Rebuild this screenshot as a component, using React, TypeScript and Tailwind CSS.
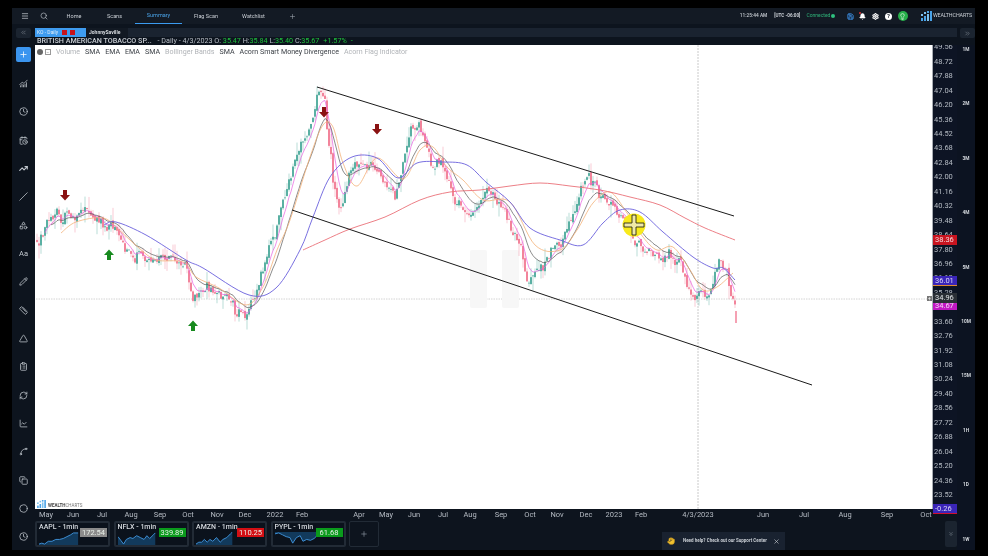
import React from "react";
import {
  Menu, Search, Plus, Save, Bell, Settings, Lightbulb, ChevronsLeft, ChevronsRight, ChevronsDown, X, Clock, CalendarClock,
  TrendingUp, Slash, Shapes, Pencil, Ruler, ClipboardList, RefreshCw, ChartLine, Spline, Copy, Circle, Clock4, Hand, Triangle, ChartNoAxesCombined,
} from "lucide-react";

type P = [number, number];

function lerp(pts: P[], x: number) {
  if (x <= pts[0][0]) return pts[0][1];
  for (let i = 1; i < pts.length; i++) {
    if (x <= pts[i][0]) {
      const t = (x - pts[i - 1][0]) / (pts[i][0] - pts[i - 1][0]);
      return pts[i - 1][1] + (pts[i][1] - pts[i - 1][1]) * t;
    }
  }
  return pts[pts.length - 1][1];
}

let seed = 12345;
function rnd() {
  seed = (seed + 0x6d2b79f5) | 0;
  let t = Math.imul(seed ^ (seed >>> 15), 1 | seed);
  t = (t + Math.imul(t ^ (t >>> 7), 61 | t)) ^ t;
  return ((t ^ (t >>> 14)) >>> 0) / 4294967296;
}

const pricePath: P[] = [
  [37, 240], [45, 225], [55, 213], [65, 214], [85, 208], [100, 222], [115, 230], [130, 252], [150, 258], [165, 258], [178, 262],
  [186, 265], [192, 300], [205, 284], [225, 296], [245, 316], [255, 295], [270, 250], [285, 190], [300, 150], [311, 125], [318, 92], [325, 110],
  [333, 180], [340, 213], [350, 168], [370, 166], [385, 186], [395, 195], [410, 130], [420, 128], [432, 168], [440, 165], [455, 205], [470, 215],
  [490, 195], [505, 215], [520, 252], [527, 282], [540, 270], [555, 240], [565, 240], [580, 195], [588, 176], [600, 195], [615, 205],
  [625, 215], [635, 240], [650, 255], [660, 260], [670, 250], [680, 265], [690, 295], [710, 293], [720, 258], [728, 280], [735, 300],
];

const orange: P[] = [[61,233],[76,222],[103,218],[119,230],[139,248],[156,260],[183,262],[196,277],[219,288],[246,305],[263,287],[277,250],[290,220],[310,157],[323,125],[333,127],[343,163],[357,186],[377,158],[403,179],[420,150],[433,147],[447,167],[463,180],[483,200],[510,202],[535,245],[560,250],[577,230],[593,203],[610,192],[627,213],[643,237],[657,250],[673,247],[690,270],[703,290],[717,287],[733,273]];
const blue: P[] = [[104,225],[116,222],[146,235],[186,260],[203,268],[249,295],[276,288],[300,250],[313,217],[330,177],[352,157],[377,158],[398,178],[417,163],[443,162],[467,165],[487,183],[510,202],[530,228],[560,240],[583,245],[603,223],[620,210],[640,212],[663,232],[693,257],[713,268],[723,268],[735,280]];
const red: P[] = [[303,250],[325,240],[350,229],[385,217],[420,200],[450,192],[480,190],[510,186],[540,183],[570,186],[600,190],[630,197],[660,205],[685,218],[705,228],[735,240]];

type C = { x: number; o: number; c: number; h: number; l: number };
const candles: C[] = [];
{
  let prev = pricePath[0][1];
  let drift = 0;
  for (let x = 37; x <= 735; x += 2) {
    const base = lerp(pricePath, x);
    drift = drift * 0.7 + (rnd() - 0.5) * 8;
    const c = base + drift + (rnd() - 0.5) * 9;
    const o = prev + (rnd() - 0.5) * 4;
    const h = Math.min(o, c) - rnd() * rnd() * 15;
    const l = Math.max(o, c) + rnd() * rnd() * 15;
    candles.push({ x, o, c, h, l });
    prev = c;
  }
}

function ema(alpha: number, startX: number) {
  let v = lerp(pricePath, startX);
  const out: P[] = [];
  for (const k of candles) {
    v = v + (k.c - v) * alpha;
    if (k.x >= startX) out.push([k.x, v]);
  }
  return out;
}
const pts = (a: P[]) => a.map((p) => `${p[0].toFixed(1)},${p[1].toFixed(1)}`).join(" ");

function smooth(a: P[]) {
  let d = `M${a[0][0]} ${a[0][1]}`;
  for (let i = 0; i < a.length - 1; i++) {
    const p0 = a[Math.max(0, i - 1)];
    const p1 = a[i];
    const p2 = a[i + 1];
    const p3 = a[Math.min(a.length - 1, i + 2)];
    const c1x = p1[0] + (p2[0] - p0[0]) / 6;
    const c1y = p1[1] + (p2[1] - p0[1]) / 6;
    const c2x = p2[0] - (p3[0] - p1[0]) / 6;
    const c2y = p2[1] - (p3[1] - p1[1]) / 6;
    d += ` C${c1x.toFixed(1)} ${c1y.toFixed(1)} ${c2x.toFixed(1)} ${c2y.toFixed(1)} ${p2[0]} ${p2[1]}`;
  }
  return d;
}

function Arrow({ x, y, up }: { x: number; y: number; up?: boolean }) {
  const d = up
    ? `M${x} ${y - 5.5} L${x + 5} ${y} L${x + 2} ${y} L${x + 2} ${y + 5} L${x - 2} ${y + 5} L${x - 2} ${y} L${x - 5} ${y} Z`
    : `M${x} ${y + 5.5} L${x + 5} ${y} L${x + 2} ${y} L${x + 2} ${y - 5} L${x - 2} ${y - 5} L${x - 2} ${y} L${x - 5} ${y} Z`;
  return <path d={d} fill={up ? "#178a1e" : "#8a1212"} />;
}

function ChartDrawing() {
  return (
    <svg viewBox="35 45 897 464" className="block h-full w-full">
      <line x1="36" x2="932" y1="299" y2="299" stroke="#c9c9c9" strokeWidth="0.8" strokeDasharray="1.5 1" />
      <line x1="698" x2="698" y1="45" y2="509" stroke="#c4c4c4" strokeWidth="0.9" strokeDasharray="2 1" />
      <rect x="470" y="250" width="17" height="58" rx="2" fill="#f7f7f7" />
      <rect x="502" y="250" width="17" height="58" rx="2" fill="#f7f7f7" />
      {candles.map((k) => {
        const up = k.c < k.o;
        const col = up ? "#2f9c8c" : "#ee6481";
        return (
          <g key={k.x}>
            <line x1={k.x} x2={k.x} y1={k.h} y2={k.l} stroke={col} strokeWidth="0.6" opacity="0.55" />
            <rect x={k.x - 0.75} y={Math.min(k.o, k.c)} width="1.5" height={Math.max(0.8, Math.abs(k.o - k.c))} fill={col} />
          </g>
        );
      })}
      <rect x="735.4" y="311" width="1.2" height="12" fill="#ee6481" />
      <polyline points={pts(ema(0.3, 45))} fill="none" stroke="#e85ee0" strokeWidth="0.7" />
      <polyline points={pts(ema(0.14, 50))} fill="none" stroke="#5a5a5a" strokeWidth="0.7" />
      <path d={smooth(orange)} fill="none" stroke="#f4b27a" strokeWidth="0.8" />
      <path d={smooth(blue)} fill="none" stroke="#6a60dc" strokeWidth="0.9" />
      <path d={smooth(red)} fill="none" stroke="#ea7078" strokeWidth="0.9" />
      <line x1="317" y1="87" x2="734" y2="216" stroke="#1a1a1a" strokeWidth="1" />
      <line x1="292" y1="210" x2="812" y2="385" stroke="#1a1a1a" strokeWidth="1" />
      <Arrow x={65} y={195} />
      <Arrow x={324} y={112} />
      <Arrow x={377} y={129} />
      <Arrow x={109} y={255} up />
      <Arrow x={193} y={326} up />
      <circle cx="634" cy="225" r="11.5" fill="#f8ea1c" />
      <path d="M632 215h4v8h8v4h-8v8h-4v-8h-8v-4h8z" fill="#efe9a8" stroke="#2a2a1a" strokeWidth="0.9" />
    </svg>
  );
}

function LogoMark({ className }: { className: string }) {
  return (
    <svg viewBox="0 0 11 10" className={className}>
      <rect x="0" y="7" width="2" height="3" fill="#4aa3e8" />
      <rect x="3" y="5" width="2" height="5" fill="#4aa3e8" />
      <rect x="6" y="3" width="2" height="7" fill="#7cc0ee" />
      <rect x="9" y="0" width="2" height="10" fill="#4aa3e8" />
      <rect x="0" y="3" width="2" height="2" fill="#7cc0ee" />
      <rect x="3" y="1" width="2" height="2" fill="#7cc0ee" />
      <rect x="6" y="0" width="2" height="2" fill="#4aa3e8" />
    </svg>
  );
}

const iconCls = "h-[9px] w-[9px] text-[#c3c9d0]";
const sideIcons = [
  <ChartNoAxesCombined className={iconCls} />, <Clock className={iconCls} />, <CalendarClock className={iconCls} />, <TrendingUp className={iconCls} strokeWidth={3} />,
  <Slash className={iconCls} />, <Shapes className={iconCls} />, <span className="text-[7.5px] leading-none text-[#c3c9d0]">Aa</span>, <Pencil className={iconCls} />,
  <Ruler className={iconCls} />, <Triangle className={iconCls} />, <ClipboardList className={iconCls} />, <RefreshCw className={iconCls} />,
  <ChartLine className={iconCls} />, <Spline className={iconCls} />, <Copy className={iconCls} />, <Circle className={iconCls} />, <Clock4 className={iconCls} />,
];

const nav = [
  { t: "Home", w: "w-[40px]" }, { t: "Scans", w: "w-[41px]" }, { t: "Summary", w: "w-[47px]", active: true }, { t: "Flag Scan", w: "w-[48px]" }, { t: "Watchlist", w: "w-[47px]" },
];

const prices = ["49.56","48.72","47.88","47.04","46.20","45.36","44.52","43.68","42.84","42.00","41.16","40.32","39.48","38.64","37.80","36.96","36.12","35.28","34.44","33.60","32.76","31.92","31.08","30.24","29.40","28.56","27.72","26.88","26.04","25.20","24.36","23.52"];
const frames = ["1M","2M","3M","4M","5M","10M","15M","1H","1D","1W"];
const ticks: [string, number][] = [["May",46],["Jun",73],["Jul",102],["Aug",131],["Sep",160],["Oct",188],["Nov",217],["Dec",245],["2022",275],["Feb",302],["Apr",359],["May",386],["Jun",414],["Jul",443],["Aug",470],["Sep",501],["Oct",530],["Nov",557],["Dec",586],["2023",614],["Feb",641],["4/3/2023",698],["Jun",763],["Jul",804],["Aug",845],["Sep",887],["Oct",926]];
const legend: [string, boolean][] = [["Volume",false],["SMA",true],["EMA",true],["EMA",true],["SMA",true],["Bollinger Bands",false],["SMA",true],["Acorn Smart Money Divergence",true],["Acorn Flag Indicator",false]];

const minis = [
  { s: "AAPL", p: "172.54", c: "bg-[#8b8b8b]", line: [[0,13],[3,12],[6,13],[10,10],[14,10],[18,8],[22,8],[26,7],[30,5],[34,3],[37,1],[42,1]] as P[], above: false },
  { s: "NFLX", p: "339.89", c: "bg-[#0a9a1c]", line: [[0,5],[3,9],[6,13],[9,8],[13,6],[16,7],[20,4],[24,6],[28,8],[31,4],[34,7],[38,3],[40,1]] as P[], above: false },
  { s: "AMZN", p: "110.25", c: "bg-[#d20f14]", line: [[0,13],[3,11],[6,11],[9,8],[12,11],[15,8],[18,10],[22,6],[26,11],[29,8],[33,6],[37,2],[39,0]] as P[], above: false },
  { s: "PYPL", p: "61.68", c: "bg-[#0a9a1c]", line: [[0,2],[4,1],[8,3],[12,5],[16,6],[19,12],[23,6],[27,4],[30,10],[34,8],[38,9],[42,7],[44,5]] as P[], above: true },
];

function Mini({ s, p, c, line, above }: (typeof minis)[number]) {
  const last = line[line.length - 1][0];
  const area = above ? `0,0 ${pts(line)} ${last},0` : `0,14 ${pts(line)} ${last},14`;
  return (
    <div className="relative h-[26px] w-[75px] rounded-[2px] border-2 border-[#222b36] bg-[#0b121c] pl-[2px]">
      <p className="text-[7px] leading-[9px] font-medium text-[#d5d9de]">{s} - 1min</p>
      <svg viewBox="0 0 44 14" className="h-[13px] w-[41px]" preserveAspectRatio="none">
        <polygon points={area} fill="#123a5c" />
        <polyline points={pts(line)} fill="none" stroke="#3f93dc" strokeWidth="1" />
      </svg>
      <span className={`absolute top-[5px] right-[1px] flex h-[9px] w-[27px] items-center justify-center text-[7.5px] text-[#e8efe8] ${c}`}>{p}</span>
    </div>
  );
}

export default function App() {
  let prevTick = 35;
  return (
    <div className="h-[556px] w-[988px] overflow-hidden bg-black pt-2 pr-[13px] pb-[6px] pl-3 font-[Roboto,sans-serif] blur-[0.35px]">
      <div className="flex h-[542px] w-[963px] flex-col bg-[#0d141e]">
        {/* header */}
        <header className="flex h-4 shrink-0 items-center bg-[#131a24]">
          <Menu className="ml-[9px] h-[8px] w-[8px] text-[#d5d9de]" />
          <Search className="ml-[11px] h-[8px] w-[8px] text-[#b8bec6]" />
          <nav className="ml-[6px] flex h-full">
            {nav.map((n) => (
              <span key={n.t} className={`flex h-full items-center justify-center text-[5.5px] ${n.w} ${n.active ? "border-b border-[#3b9bf0] text-[#4aa3e8]" : "text-[#c9ced4]"}`}>{n.t}</span>
            ))}
          </nav>
          <Plus className="ml-[12px] h-[7px] w-[7px] text-[#9aa2ab]" />
          <div className="ml-auto flex items-center text-[5px] text-[#c9ced4]">
            <span className="text-[4.8px] font-medium">11:25:44 AM</span>
            <span className="ml-[7px] text-[4.6px] font-bold">[UTC -06:00]</span>
            <span className="ml-[6px] text-[#2fb57a]">Connected</span>
            <span className="ml-[1px] h-[3.5px] w-[3.5px] rounded-full bg-[#2fc07f]" />
            <Save className="ml-[12px] h-[7px] w-[7px] text-[#3f93ea]" strokeWidth={3} />
            <span className="relative ml-[5px]">
              <Bell className="h-[7px] w-[7px] fill-white text-white" />
              <span className="absolute -top-[1px] left-0 h-[2.5px] w-[2.5px] rounded-full bg-[#e03030]" />
            </span>
            <Settings className="ml-[6px] h-[7px] w-[7px] text-white" strokeWidth={3.5} />
            <span className="ml-[6px] flex h-[7px] w-[7px] items-center justify-center rounded-full bg-white text-[6px] leading-none font-bold text-[#131a24]">?</span>
            <span className="ml-[6px] flex h-[10px] w-[10px] items-center justify-center rounded-full bg-[#27b04a]">
              <Lightbulb className="h-[7px] w-[7px] text-white" />
            </span>
            <LogoMark className="ml-[13px] h-[10px] w-[11px]" />
            <span className="mr-[3px] ml-[1px] text-[5.3px] tracking-[-0.1px] text-[#c9ced4]">WEALTHCHARTS</span>
          </div>
        </header>

        <div className="flex min-h-0 flex-1">
          {/* left tool bar */}
          <aside className="flex w-[23px] shrink-0 flex-col items-center">
            <span className="mt-1 mb-[2px] flex h-[10px] w-[15px] items-center justify-center rounded-[2px] bg-[#1b2430]">
              <ChevronsLeft className="h-[7px] w-[7px] text-[#7f8893]" />
            </span>
            <span className="flex h-[28.4px] items-center">
              <span className="flex h-[15px] w-[15px] items-center justify-center rounded-[2px] bg-[#3b95ef]">
                <Plus className="h-[9px] w-[9px] text-white" />
              </span>
            </span>
            {sideIcons.map((ic, i) => (
              <span key={i} className="flex h-[28.42px] translate-y-[1px] items-center justify-center">{ic}</span>
            ))}
          </aside>

          <div className="flex min-w-0 flex-1 flex-col">
            {/* tab rows */}
            <div className="flex h-[21px] shrink-0">
              <div className="min-w-0 flex-1">
                <div className="mt-[4px] flex h-[9px] bg-[#1a2330]">
                  <span className="flex w-[51px] items-center gap-[2px] bg-[#3f9cf0] pl-[2px] text-[5px] text-[#dbeaf8]">
                    <span className="mr-[2px]">KO - Daily</span>
                    <span className="h-[5px] w-[5px] bg-[#c8131b]" />
                    <span className="ml-[1px] h-[5px] w-[5px] bg-[#c8131b]" />
                  </span>
                  <span className="flex w-[42px] items-center bg-[#121923] pl-[3px] text-[5px] font-bold text-[#d5d9de]">JohnnySaville</span>
                </div>
                <p className="ml-[2px] whitespace-nowrap text-[7.2px] leading-[8px] text-[#b8bec6]">
                  <span className="font-medium text-[#c9ced4]">BRITISH AMERICAN TOBACCO SP...</span>
                  <span className="ml-[4px]"> - Daily - 4/3/2023 O: </span>
                  <span className="text-[#1fc03c]">35.47</span> H:<span className="text-[#1fc03c]">35.84</span> L:<span className="text-[#1fc03c]">35.40</span> C:<span className="text-[#1fc03c]">35.67</span>
                  <span className="ml-[4px] text-[#1fc03c]">+1.57%</span>
                  <span className="ml-[4px] text-[#1fc03c]">-</span>
                </p>
              </div>
              <span className="mt-[4px] ml-[3px] flex h-[10px] w-[15px] items-center justify-center rounded-[2px] bg-[#1b2430]">
                <ChevronsRight className="h-[7px] w-[7px] text-[#7f8893]" />
              </span>
            </div>

            <div className="flex min-h-0 flex-1">
              <div className="flex min-w-0 flex-1 flex-col">
                {/* chart + axis */}
                <div className="flex h-[464px] shrink-0">
                  <div className="relative h-full w-[897px] bg-white">
                    <ChartDrawing />
                    <div className="absolute top-[2px] left-[2px] flex items-center text-[7.1px] leading-[10px] text-[#3a3f45]">
                      <span className="h-[6px] w-[6px] rounded-full bg-[#666]" />
                      <span className="ml-[2px] flex h-[6px] w-[6px] items-center justify-center border border-[#999] text-[5px] leading-none text-[#777]">−</span>
                      {legend.map(([t, on], i) => (
                        <span key={i} className={`ml-[5px] whitespace-nowrap first:ml-[2px] ${on ? "" : "text-[#b1b4b8]"}`}>{t}</span>
                      ))}
                    </div>
                    <div className="absolute bottom-[1px] left-[2px] flex items-end">
                      <LogoMark className="h-[8px] w-[9px]" />
                      <span className="ml-[2px] text-[4.5px] leading-[5px] font-bold text-[#444]">WEALTH<span className="font-normal text-[#777]">CHARTS</span></span>
                    </div>
                    <span className="absolute top-[251px] right-0 flex h-[5px] w-[5px] items-center justify-center bg-[#777] text-[5px] leading-none text-white">+</span>
                  </div>
                  <div className="relative h-full w-[25px] border-l border-[#a9adb3] bg-[#0d1424] pl-[1px]">
                    <div className="h-full overflow-hidden">
                      <div className="-mt-[5.2px]">
                        {prices.map((p) => (
                          <div key={p} className="flex h-[14.45px] items-center text-[7.5px] text-[#b5bbc3]">{p}</div>
                        ))}
                      </div>
                    </div>
                    <span className="absolute top-[190px] left-0 flex h-[10px] w-[24px] items-center bg-[#c8141f] pl-[2px] text-[7.5px] text-[#f3d9dc]">38.36</span>
                    <span className="absolute top-[231px] left-0 flex h-[10px] w-[24px] items-center border-b border-[#e08a30] bg-[#3a25b8] pl-[2px] text-[7.5px] text-[#dcd8f6]">36.01</span>
                    <span className="absolute top-[256px] left-0 flex h-[9px] w-[24px] items-center bg-[#c218c4] pl-[2px] text-[7.5px] text-[#f6d8f6]">34.67</span>
                    <span className="absolute top-[248px] left-0 flex h-[10px] w-[24px] items-center bg-[#2a2f36] pl-[2px] text-[7.5px] text-[#e2e5e8]">34.96</span>
                    <span className="absolute top-[459px] left-0 z-10 flex h-[10px] w-[24px] items-center border-b border-[#d01030] bg-[#3a25b8] pl-[2px] text-[7.5px] text-[#dcd8f6]">-0.26</span>
                  </div>
                </div>
                {/* time axis */}
                <div className="flex h-[11px] shrink-0 items-center text-[7.5px] text-[#b5bbc3]">
                  {ticks.map(([t, x]) => {
                    const m = x - prevTick;
                    prevTick = x;
                    return (
                      <span key={t + x} style={{ marginLeft: m }} className="flex w-0 justify-center whitespace-nowrap">{t}</span>
                    );
                  })}
                </div>
                {/* bottom row */}
                <div className="flex min-h-0 flex-1 pt-[1px]">
                  <div className="flex gap-[3.5px]">
                    {minis.map((m) => <Mini key={m.s} {...m} />)}
                    <span className="flex h-[26px] w-[30px] items-center justify-center rounded-[2px] border border-[#222b36]">
                      <Plus className="h-[8px] w-[8px] text-[#8d96a0]" />
                    </span>
                  </div>
                  <div className="mt-auto ml-[283px] flex h-[18px] w-[123px] items-center bg-[#192230] pl-[5px]">
                    <Hand className="h-[8px] w-[8px] fill-[#f2c230] text-[#d9a520]" />
                    <span className="ml-[8px] text-[4.5px] font-bold whitespace-nowrap text-[#c9ced4]">Need help? Check out our Support Center</span>
                    <X className="ml-[6px] h-[7px] w-[7px] text-[#d5d9de]" />
                  </div>
                  <span className="ml-[160px] flex h-[26px] w-[12px] items-center justify-center self-start rounded-[2px] bg-[#1b2430]">
                    <ChevronsDown className="h-[6px] w-[6px] text-[#8d96a0]" />
                  </span>
                </div>
              </div>
              {/* time-frame column */}
              <div className="w-[18px] shrink-0 bg-[#0c1321]">
                {frames.map((f) => (
                  <div key={f} className="flex h-[54.4px] items-start justify-center pt-[1px] text-[4.8px] font-bold text-[#d5d9de]">{f}</div>
                ))}
              </div>
            </div>
          </div>
        </div>
      </div>
    </div>
  );
}
